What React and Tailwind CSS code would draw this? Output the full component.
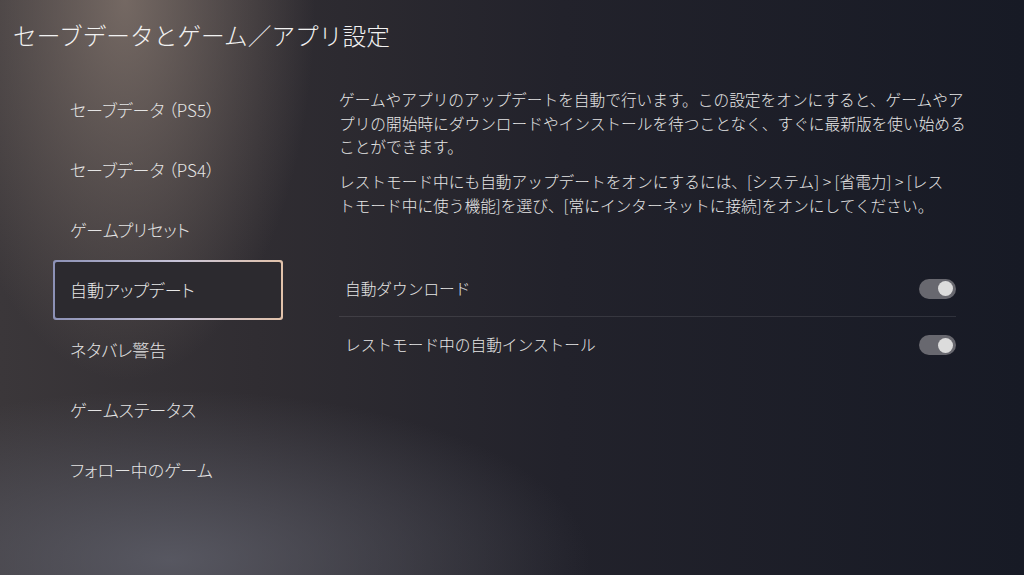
import React from "react";

const menu = [
  ["セーブデータ", "（PS5）"],
  ["セーブデータ", "（PS4）"],
  ["ゲームプリセット"],
  ["自動アップデート"],
  ["ネタバレ警告"],
  ["ゲームステータス"],
  ["フォロー中のゲーム"],
];

function Label({ parts }) {
  return (
    <>
      {parts[0]}
      {parts[1] && <span className="ml-[4px]">{parts[1]}</span>}
    </>
  );
}

function Toggle() {
  return (
    <div className="w-[37px] h-[20px] rounded-full bg-[#68686f] flex items-center justify-end pr-[3px]">
      <div className="w-[15px] h-[15px] rounded-full bg-[#dcdcdc]" />
    </div>
  );
}

export default function App() {
  return (
    <div
      className="w-[1024px] h-[575px] overflow-hidden text-white bg-[radial-gradient(ellipse_190px_380px_at_125px_0px,rgba(132,118,110,0.8),rgba(132,118,110,0)),radial-gradient(ellipse_420px_170px_at_170px_560px,rgba(96,97,108,0.8),rgba(96,97,108,0)),linear-gradient(to_right,#3b373a_0%,#302d32_25%,#22222b_55%,#171a25_100%)]"
      style={{ fontFamily: '"Noto Sans CJK JP", "Noto Sans", sans-serif' }}
    >
      <div className="h-[80px] pl-[13px] pt-[24px]">
        <h1 className="text-[23.7px] leading-none font-light text-[#f2f2f2]">
          セーブデータとゲーム／アプリ設定
        </h1>
      </div>
      <div className="flex">
        <div className="w-[339px] pl-[53px]">
          {menu.map((m, i) =>
            i === 3 ? (
              <div
                key={i}
                className="w-[230px] h-[60px] p-[2px] rounded-[3px] bg-[linear-gradient(to_right,#8c91b6,#c8c4d8_55%,#e2c2aa)]"
              >
                <div className="w-full h-full flex items-center pl-[15px] rounded-[2px] bg-[#2c2a2f] text-[17px] font-light text-[#e8e8e8] [font-feature-settings:'palt']">
                  <Label parts={m} />
                </div>
              </div>
            ) : (
              <div
                key={i}
                className="w-[230px] h-[60px] flex items-center pl-[17px] text-[17px] font-light text-[#e4e4e4] [font-feature-settings:'palt']"
              >
                <Label parts={m} />
              </div>
            )
          )}
        </div>
        <div className="w-[617px] pt-[8px]">
          <p className="w-[640px] text-[15.7px] leading-[23.5px] font-light text-[#e6e6e6]">
            ゲームやアプリのアップデートを自動で行います。この設定をオンにすると、ゲームやア
            <br />
            プリの開始時にダウンロードやインストールを待つことなく、すぐに最新版を使い始める
            <br />
            ことができます。
          </p>
          <p className="w-[640px] mt-[11.5px] text-[15.7px] leading-[23.5px] font-light text-[#e6e6e6]">
            レストモード中にも自動アップデートをオンにするには、[システム] &gt; [省電力] &gt; [レス
            <br />
            トモード中に使う機能]を選び、[常にインターネットに接続]をオンにしてください。
          </p>
          <div className="mt-[44px]">
            <div className="h-[56px] flex items-center justify-between pl-[6px] border-b border-[#ffffff1a]">
              <span className="text-[15.7px] font-light text-[#e6e6e6]">自動ダウンロード</span>
              <Toggle />
            </div>
            <div className="h-[56px] flex items-center justify-between pl-[6px]">
              <span className="text-[15.7px] font-light text-[#e6e6e6]">
                レストモード中の自動インストール
              </span>
              <Toggle />
            </div>
          </div>
        </div>
      </div>
    </div>
  );
}
